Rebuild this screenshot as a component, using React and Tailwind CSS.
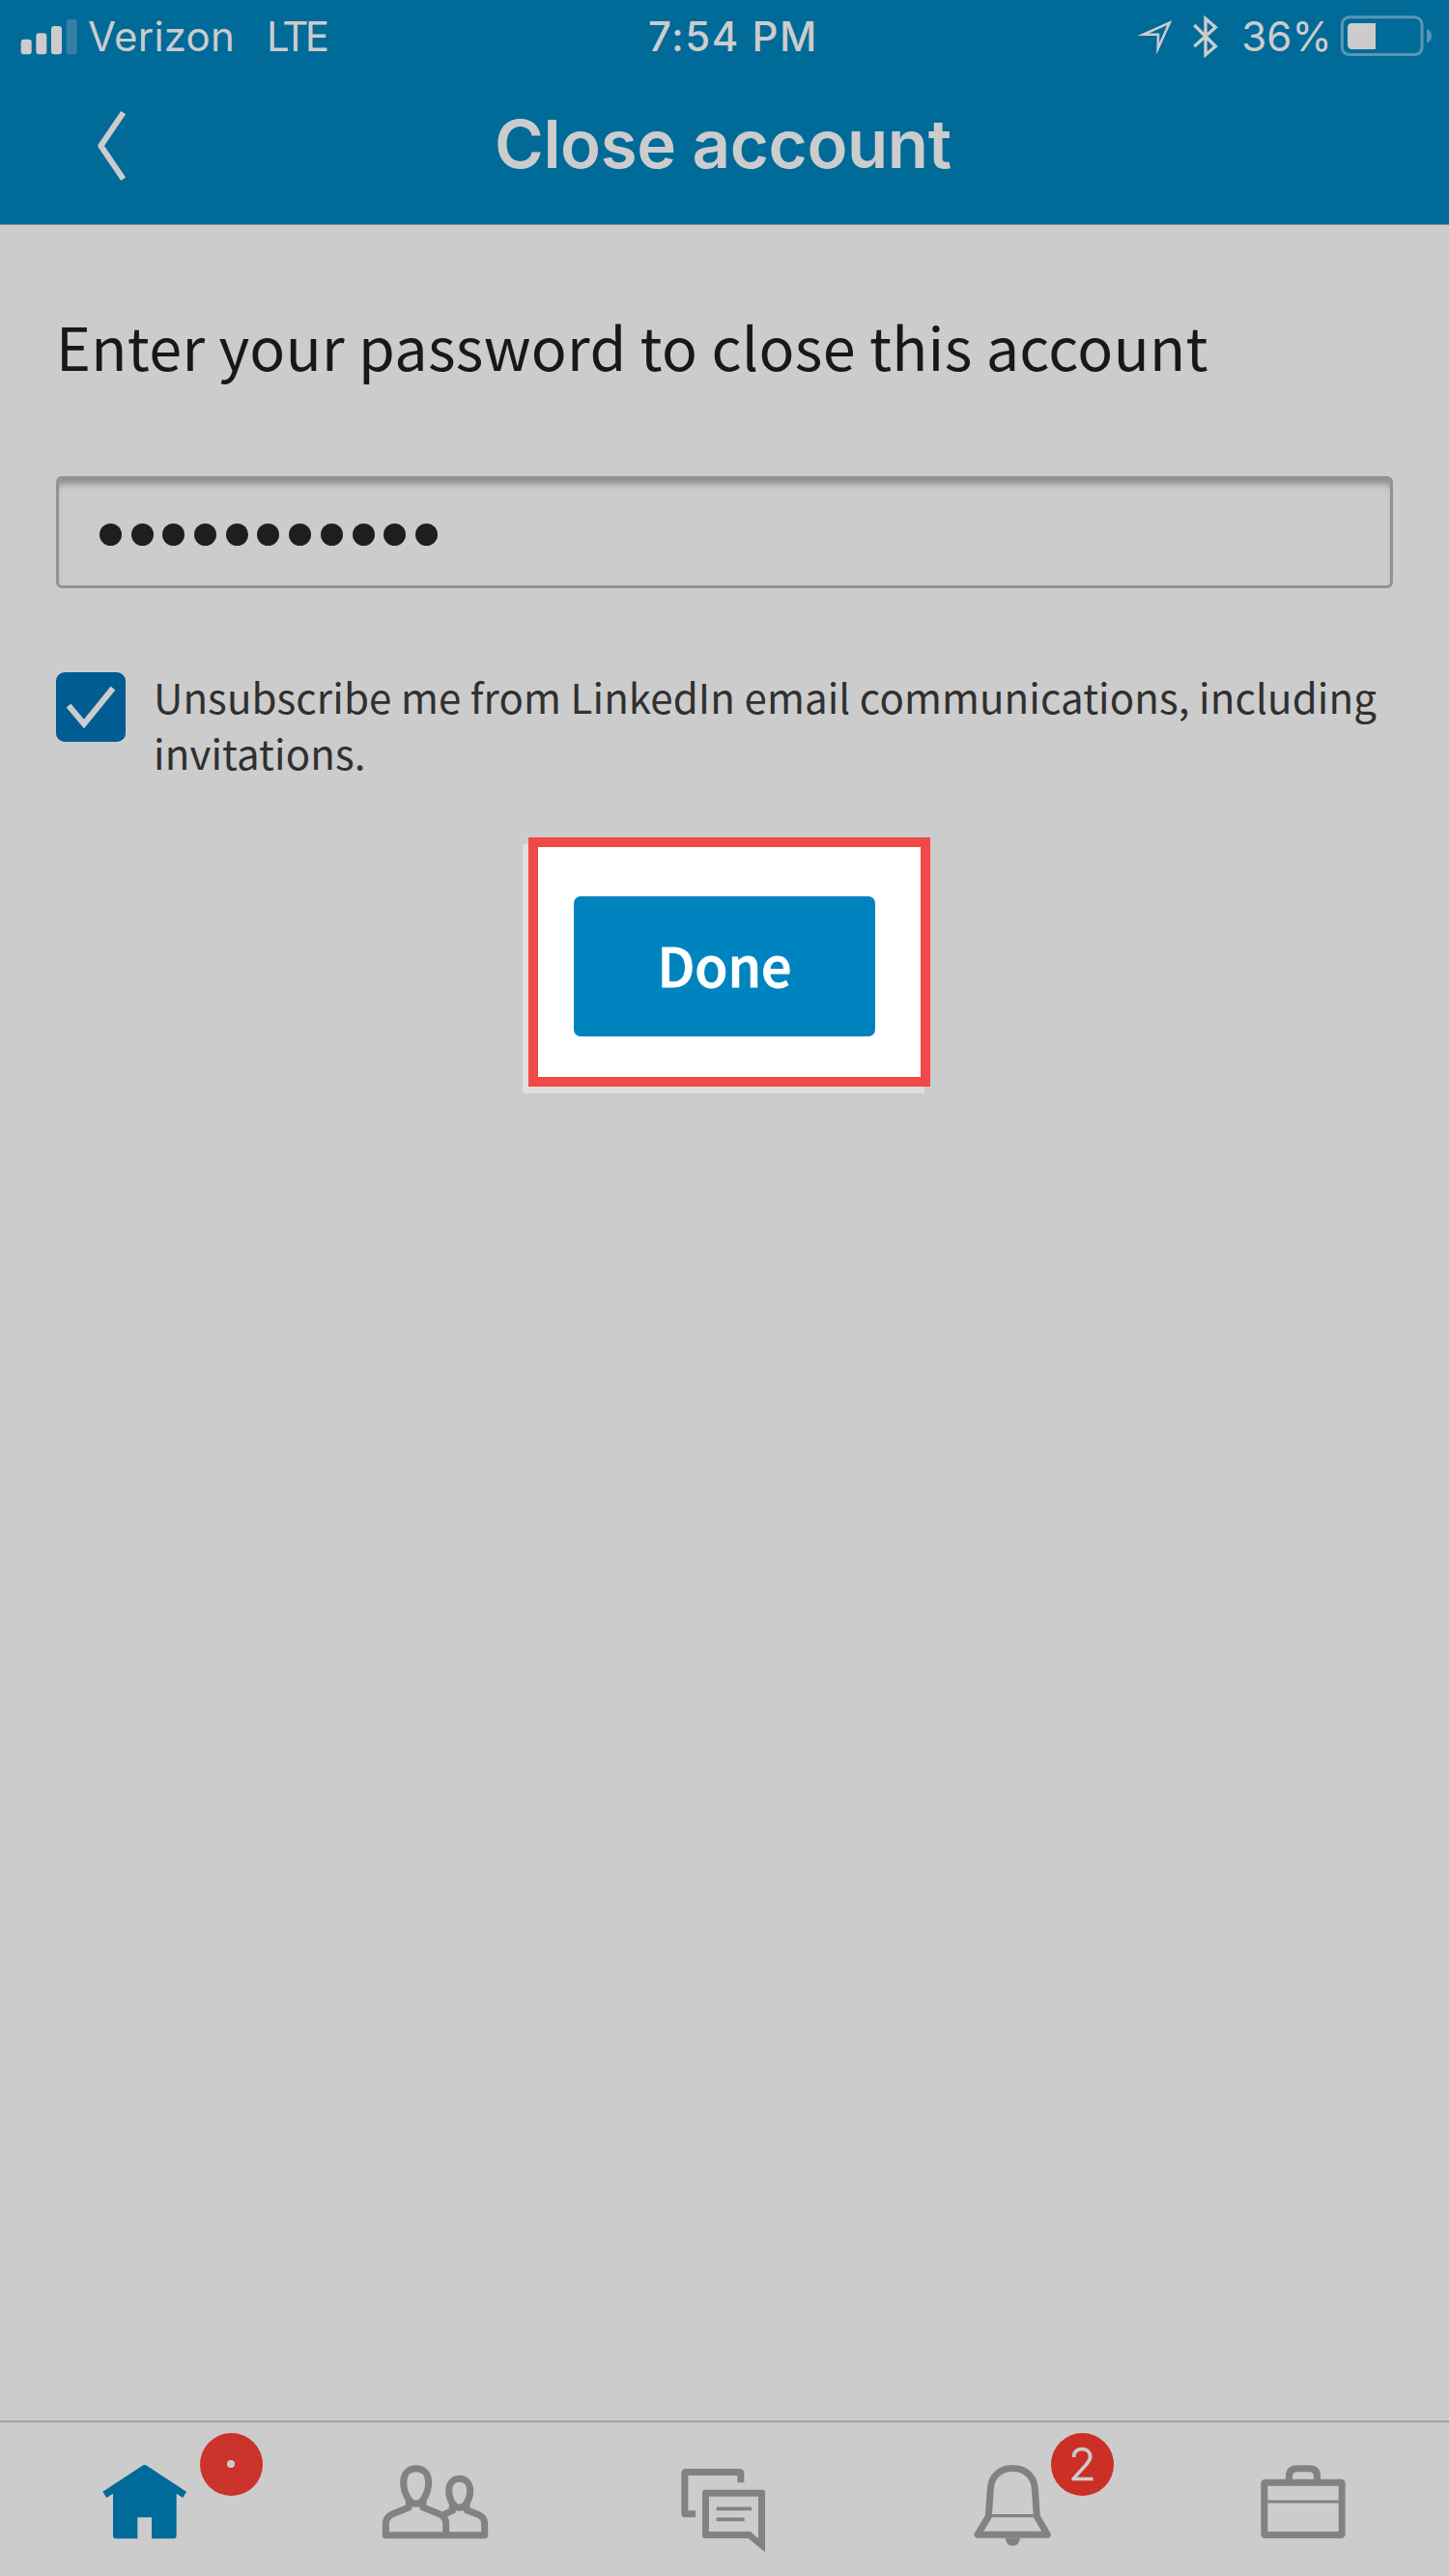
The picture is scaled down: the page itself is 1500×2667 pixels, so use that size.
import React from "react";

const LIGHT = "#cccccc";
const GREY = "#828282";

function SignalBars() {
  return (
    <svg className="ml-[21px] block h-[38px] w-[60px] shrink-0" viewBox="63 51 180 114" fill={LIGHT}>
      <rect x="65" y="116" width="33" height="47" rx="9" />
      <rect x="112" y="97" width="33" height="66" rx="9" />
      <rect x="159" y="75" width="33" height="88" rx="9" />
      <rect x="206" y="54" width="33" height="109" rx="9" fill="#3580a6" />
    </svg>
  );
}

function LocationIcon() {
  return (
    <svg className="block h-[50px] w-[40px]" viewBox="228 36 120 150" fill="none" stroke={LIGHT} strokeWidth="7.5">
      <path d="M332 68 L250 104.500 L297 104.500 L296 148 Z" strokeMiterlimit="10" />
    </svg>
  );
}

function BluetoothIcon() {
  return (
    <svg className="ml-[17px] block h-[50px] w-[30px]" viewBox="399 36 90 150" fill="none" stroke={LIGHT} strokeWidth="10">
      <path d="M409 75 L475 141 L444 167 L444 55 L475 82 L409 141" />
    </svg>
  );
}

function BatteryIcon() {
  return (
    <svg className="block h-[50px] w-[96px]" viewBox="861 36 288 150">
      <rect x="868" y="50.500" width="248" height="116" rx="22" fill="none" stroke="#5c96b2" strokeWidth="9" />
      <path d="M972 69 V150 H899 Q885 150 885 136 V83 Q885 69 899 69 Z" fill={LIGHT} />
      <path d="M1131 87 Q1146 93 1146 109 Q1146 125 1131 131 Z" fill="#5c96b2" />
    </svg>
  );
}

function StatusBar() {
  return (
    <div className="grid h-[76px] grid-cols-3 items-center whitespace-nowrap text-[42px] leading-[50px] text-[#ccc]">
      <div className="flex items-center">
        <SignalBars />
        <span className="ml-[10px] tracking-[0.2px]">Verizon</span>
        <span className="ml-[33px] tracking-[-3.5px]">LTE</span>
      </div>
      <div className="pl-[171px] font-medium tracking-[1.5px]">7:54 PM</div>
      <div className="flex items-center justify-end pr-[17px]">
        <LocationIcon />
        <BluetoothIcon />
        <span className="ml-[22px] mr-[8px] tracking-[0.2px]">36%</span>
        <BatteryIcon />
      </div>
    </div>
  );
}

function Header() {
  return (
    <header className="h-[233px] border-b border-[#8a8a8a] bg-[#006a99]">
      <StatusBar />
      <div className="flex h-[145px] items-center">
        <button className="ml-[96px] mt-[4px] h-[80px] w-[40px]" aria-label="Back">
          <svg className="block h-[80px] w-[40px]" viewBox="288 336 120 240" fill="none" stroke={LIGHT} strokeWidth="18" strokeLinejoin="round">
            <path d="M383 353 L313 456 L383 559" />
          </svg>
        </button>
        <h1 className="ml-[376px] whitespace-nowrap text-[69px] font-semibold leading-[80px] tracking-[-0.4px] text-[#ccc]">
          Close account
        </h1>
      </div>
    </header>
  );
}

function PasswordField() {
  return (
    <div className="mt-[93px] flex h-[116px] w-[1384px] items-center gap-[9.700px] rounded-[6px] border-[3px] border-[#939393] pl-[42px] pt-[5px] shadow-[inset_0_9px_7px_-4px_#8c8c8c]">
      {Array.from({ length: 11 }, (_, i) => (
        <span key={i} className="size-[23px] rounded-full bg-[#1e1e1e]" />
      ))}
    </div>
  );
}

function Checkbox() {
  return (
    <span className="mt-[4px] flex size-[72px] shrink-0 rounded-[9px] bg-[#005c91]">
      <svg className="block size-[72px]" viewBox="58 696 72 72" fill="none" stroke={LIGHT} strokeWidth="6">
        <path d="M71 730.500 L87 749.500 L117 712.500" />
      </svg>
    </span>
  );
}

function HomeIcon() {
  return (
    <path
      fill="#006a99"
      d="M139 269 L261 189 Q269 183 277 189 L399 269 L388 288 L368 275 V406 Q368 415 359 415 H291 V349 H247 V415 H180 Q171 415 171 406 V275 L151 288 Z"
    />
  );
}

function PeopleIcon() {
  return (
    <g fill="none" stroke={GREY} strokeWidth="21">
      <path d="M1112 197 C1088 197 1073 214 1073 240 C1073 270 1090 307 1112 307 C1134 307 1151 270 1151 240 C1151 214 1136 197 1112 197 Z" />
      <path d="M1247 229 C1226 229 1214 246 1214 267 C1214 294 1230 319 1247 319 C1264 319 1280 294 1280 267 C1280 246 1268 229 1247 229 Z" />
      <path d="M1090 290 V318 L1040 338 Q1018 348 1018 368 V404 H1325 V368 Q1325 348 1304 340 L1269 326 V306" strokeLinejoin="round" />
      <path d="M1134 290 V318 L1184 338 Q1205 348 1205 368 V404 M1225 306 V328 L1192 343" />
    </g>
  );
}

function MessagesIcon() {
  return (
    <g fill="none" stroke={GREY} strokeWidth="21">
      <path d="M180 338.500 H150 Q146.500 338.500 146.500 335 V212 Q146.500 208.500 150 208.500 H317 Q320.500 208.500 320.500 212 V241" />
      <path
        fill={GREY}
        fillRule="evenodd"
        stroke="none"
        d="M209 263 H388 Q396 263 396 271 V457 L344 414 H209 Q201 414 201 406 V271 Q201 263 209 263 Z M222 284 V393 H351 L375 415 V284 Z"
      />
      <path d="M245 322 H354 M245 355 H332" strokeWidth="11" />
    </g>
  );
}

function BellIcon() {
  return (
    <g fill="none" stroke={GREY} strokeWidth="21">
      <path
        strokeLinejoin="round"
        d="M265 196.500 C222 196.500 198 225 196 260 L190 346 L156 403 H373 L340 346 L334 260 C332 225 308 196.500 265 196.500 Z"
      />
      <path d="M195 344 H337" strokeWidth="10" />
      <path d="M242 413 H288 Q285 437 265 437 Q245 437 242 413 Z" fill={GREY} stroke="none" />
    </g>
  );
}

function BriefcaseIcon() {
  return (
    <g fill="none" stroke={GREY} strokeWidth="21">
      <rect x="1046.500" y="240.500" width="241" height="163" rx="3" />
      <path d="M1123.500 236 V222 Q1123.500 197 1148 197 H1186 Q1210.500 197 1210.500 222 V236" />
      <path d="M1055 300 H1280" strokeWidth="9" />
    </g>
  );
}

const TABS = [
  {
    name: "Home",
    viewBox: "90 144 360 360",
    Icon: HomeIcon,
    badge: (
      <span className="absolute left-[206.5px] top-[10.500px] flex size-[65px] items-center justify-center rounded-full bg-[#cb332b]">
        <span className="size-[8px] rounded-full bg-[#ccc]" />
      </span>
    ),
  },
  { name: "My Network", viewBox: "990 144 360 360", Icon: PeopleIcon },
  { name: "Messaging", viewBox: "90 144 360 360", Icon: MessagesIcon },
  {
    name: "Notifications",
    viewBox: "90 144 360 360",
    Icon: BellIcon,
    badge: (
      <span className="absolute left-[188px] top-[10.500px] flex size-[65px] items-center justify-center rounded-full bg-[#cb2f26] pb-px text-[47px] font-light leading-[60px] text-[#ccc] [-webkit-text-stroke:0.5px_#ccc]">
        2
      </span>
    ),
  },
  { name: "Jobs", viewBox: "990 144 360 360", Icon: BriefcaseIcon },
];

function TabBar() {
  return (
    <nav className="mt-auto grid h-[161px] grid-cols-5 border-t-2 border-[#a0a0a0]">
      {TABS.map(({ name, viewBox, Icon, badge }) => (
        <a key={name} aria-label={name} className="relative flex justify-center pt-[30px]">
          <svg className="block size-[120px]" viewBox={viewBox}>
            <Icon />
          </svg>
          {badge}
        </a>
      ))}
    </nav>
  );
}

export default function App() {
  return (
    <div className="flex h-[2667px] w-[1500px] flex-col overflow-hidden bg-[#ccc] font-['Inter',sans-serif]">
      <Header />
      <main className="px-[58px] pt-[83px] font-['Noto_Sans_CJK_SC','Noto_Sans',sans-serif]">
        <h2 className="whitespace-nowrap text-[61px] leading-[84px] tracking-[0.35px] text-[#181818]">
          Enter your password to close this account
        </h2>
        <PasswordField />
        <div className="mt-[83px] flex">
          <Checkbox />
          <p className="ml-[29px] whitespace-nowrap text-[42px] leading-[58px] tracking-[0.11px] text-[#303030]">
            Unsubscribe me from LinkedIn email communications, including
            <br />
            invitations.
          </p>
        </div>
        <div className="ml-[489px] mt-[59px] h-[258px] w-[416px] border-[10px] border-[#f14848] bg-white pl-[37px] pt-[51px] shadow-[-6px_7px_0_#dedede]">
          <button className="flex h-[145px] w-[312px] items-center justify-center rounded-[7px] bg-[#0084bf] pb-[5px] text-[55.5px] font-medium leading-[80px] text-white [-webkit-text-stroke:1px_white]">
            Done
          </button>
        </div>
      </main>
      <TabBar />
    </div>
  );
}
